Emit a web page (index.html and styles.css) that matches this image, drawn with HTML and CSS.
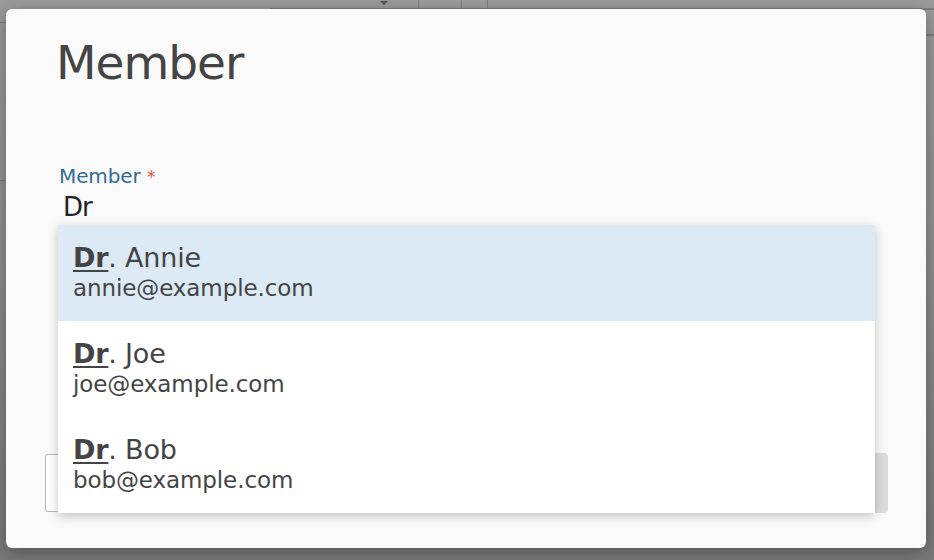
FILE: index.html
```html
<!DOCTYPE html>
<html>
<head>
<meta charset="utf-8">
<link rel="stylesheet" href="styles.css">
</head>
<body>
<div class="page">
  <div class="page-line line-a"></div>
  <div class="page-line line-b"></div>
  <div class="page-line line-c"></div>
  <div class="page-line line-d"></div>
  <div class="page-caret"></div>
  <div class="page-vline vline-a"></div>
  <div class="page-vline vline-b"></div>
  <div class="page-box"></div>
</div>

<div class="modal">
  <h1 class="modal-title">Member</h1>
  <div class="field">
    <label class="field-label">Member <span class="req">*</span></label>
    <div class="field-input">Dr</div>
  </div>
  <div class="under-row">
    <div class="under-input"></div>
    <div class="under-btn"></div>
  </div>

  <ul class="dropdown">
    <li class="option active">
      <div class="opt-name"><b>Dr</b>. Annie</div>
      <div class="opt-mail">annie@example.com</div>
    </li>
    <li class="option">
      <div class="opt-name"><b>Dr</b>. Joe</div>
      <div class="opt-mail">joe@example.com</div>
    </li>
    <li class="option">
      <div class="opt-name"><b>Dr</b>. Bob</div>
      <div class="opt-mail">bob@example.com</div>
    </li>
  </ul>
</div>
</body>
</html>
```

FILE: styles.css
```css
html, body {
  margin: 0;
  padding: 0;
  width: 934px;
  height: 560px;
  overflow: hidden;
}
body {
  background: linear-gradient(#9c9c9c 0%, #929292 40%, #7a7a7a 100%);
  font-family: "DejaVu Sans", sans-serif;
  position: relative;
}
.page {
  position: absolute;
  inset: 0;
}
.page-line {
  position: absolute;
  height: 1px;
  background: #7e7e7e;
}
.line-a { left: 270px; right: 0; top: 8px; }
.line-b { left: 0; width: 10px; top: 22px; }
.line-c { left: 0; width: 10px; top: 180px; }
.line-d { right: 0; width: 10px; top: 34px; height: 2px; }
.page-caret {
  position: absolute;
  left: 380px;
  top: 1px;
  width: 0;
  height: 0;
  border-left: 4px solid transparent;
  border-right: 4px solid transparent;
  border-top: 4px solid #555;
}
.page-vline {
  position: absolute;
  top: 0;
  width: 1px;
  height: 10px;
  background: #7e7e7e;
}
.vline-a { left: 418px; }
.vline-b { left: 461px; }
.page-box {
  position: absolute;
  left: 487px;
  top: -4px;
  right: -4px;
  height: 12px;
  border: 1px solid #7e7e7e;
  border-radius: 3px;
}

.modal {
  position: absolute;
  left: 6px;
  top: 9px;
  width: 920px;
  height: 539px;
  box-sizing: border-box;
  background: #fafafa;
  border-radius: 6px;
  box-shadow: 0 4px 18px rgba(0, 0, 0, 0.35);
  padding: 26px 0 0 50px;
  color: #444;
}
.modal-title {
  margin: 0;
  font-size: 47px;
  line-height: 56px;
  font-weight: normal;
  letter-spacing: -1px;
  color: #444;
}
.field {
  margin-top: 73px;
  display: flex;
  flex-direction: column;
}
.field-label {
  font-size: 20px;
  line-height: 24px;
  color: #336b98;
  margin-left: 3px;
  letter-spacing: -0.1px;
}
.req {
  color: #e0524a;
  font-size: 17px;
}
.field-input {
  margin-top: 3px;
  margin-left: 7px;
  font-size: 26px;
  line-height: 30px;
  color: #222;
  letter-spacing: -1px;
}
.under-row {
  margin-top: 232px;
  margin-left: -11px;
  display: flex;
  width: 843px;
  height: 58px;
}
.under-input {
  flex: 1;
  border: 1px solid #b8b8b8;
  border-radius: 3px;
  background: #fff;
}
.under-btn {
  width: 60px;
  background: #dcdcdc;
  border-radius: 0 4px 4px 0;
  margin-top: -1px;
  height: 60px;
}

.dropdown {
  position: absolute;
  left: 52px;
  top: 216px;
  width: 817px;
  margin: 0;
  padding: 0;
  list-style: none;
  background: #fff;
  box-shadow: 0 3px 10px rgba(0, 0, 0, 0.22);
}
.option {
  padding: 18px 15px 19px;
  height: 59px;
}
.option.active {
  background: #dbeaf5;
}
.opt-name {
  font-size: 27px;
  line-height: 30px;
  color: #444;
  letter-spacing: -0.2px;
}
.opt-name b {
  text-decoration: underline;
  text-decoration-thickness: 2px;
  text-underline-offset: 3px;
}
.opt-mail {
  margin-top: 2px;
  font-size: 23px;
  line-height: 27px;
  color: #444;
  letter-spacing: -0.1px;
}
```
